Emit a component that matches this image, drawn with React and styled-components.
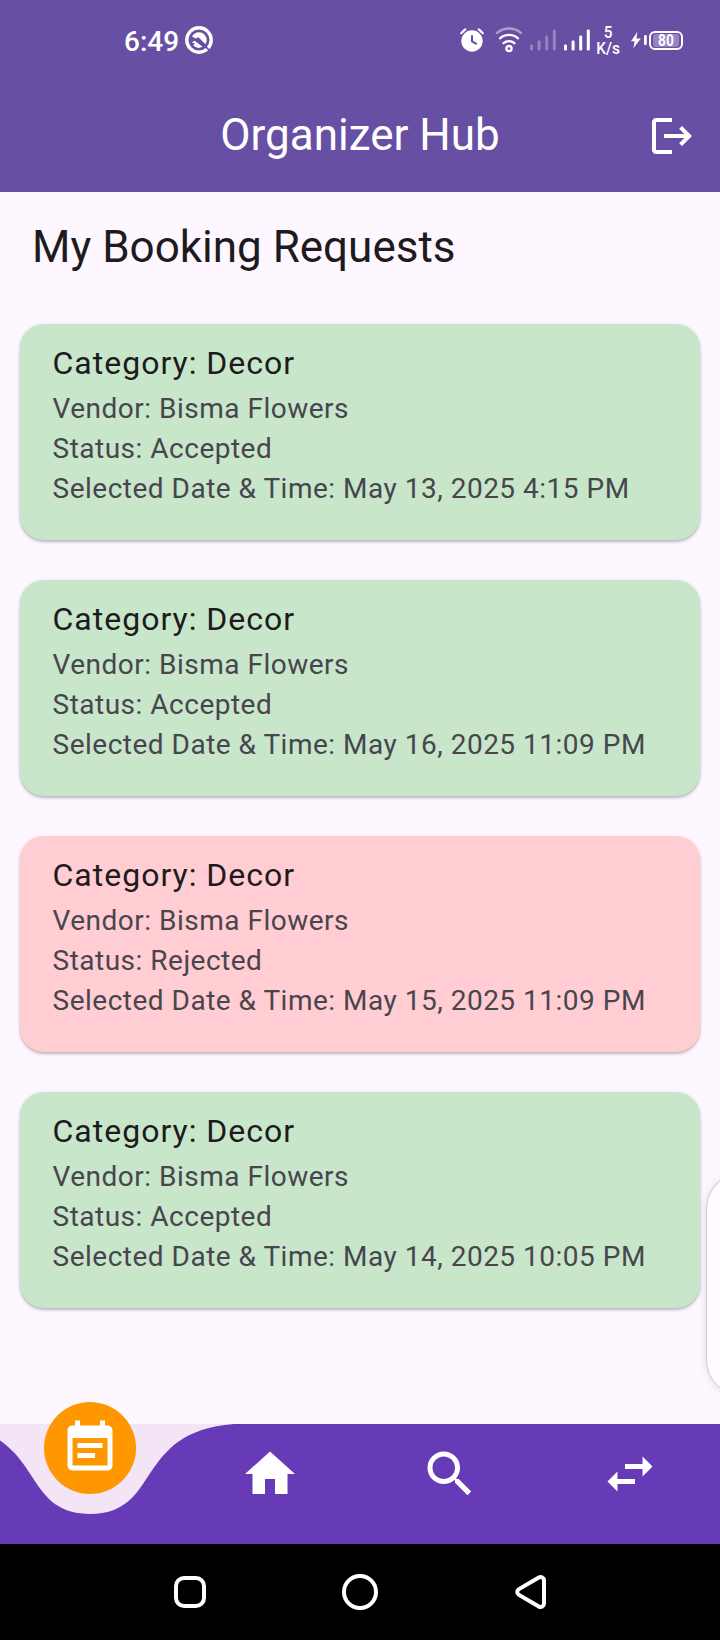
import React from 'react';
import styled, { createGlobalStyle } from 'styled-components';
import { MdEventNote, MdHome, MdLogout, MdSearch, MdSwapHoriz } from 'react-icons/md';

const GlobalStyle = createGlobalStyle`
  * { box-sizing: border-box; }
  body {
    margin: 0;
    background: #fef7ff;
    font-family: Roboto, sans-serif;
  }
`;

const Screen = styled.div`
  position: relative;
  display: flex;
  flex-direction: column;
  width: 720px;
  height: 1640px;
  overflow: hidden;
  background: #fef7ff;
  color: #1d1b20;
`;

const Header = styled.header`
  background: #6750a4;
  color: #fff;
`;

const StatusBar = styled.div`
  display: flex;
  align-items: center;
  justify-content: space-between;
  height: 80px;
  padding: 0 37px 0 124px;
`;

const StatusGroup = styled.div`
  display: flex;
  align-items: center;
`;

const Clock = styled.span`
  margin-right: 5.5px;
  padding-top: 3px;
  font-size: 28px;
  font-weight: 500;
  line-height: 32px;
`;

const Glyph = styled.svg`
  display: block;
  flex: none;
  margin-left: ${(p) => p.$gap || 0}px;
  opacity: ${(p) => p.$opacity || 1};
`;

const Speed = styled.div`
  display: flex;
  flex-direction: column;
  align-items: center;
  width: 26px;
  margin: 1px 0 0 5px;
  font-size: 16.5px;
  font-weight: 500;
  line-height: 16px;
  transform: scaleX(0.93);
`;

const Battery = styled.div`
  display: flex;
  align-items: center;
  justify-content: center;
  width: 34px;
  height: 19px;
  margin-left: 2px;
  padding: 2px;
  border: 2px solid #fff;
  border-radius: 6px;
`;

const BatteryLevel = styled.div`
  flex: 1;
  height: 13px;
  border-radius: 3px;
  background: rgba(255, 255, 255, 0.3);
  text-align: center;
`;

const BatteryValue = styled.span`
  display: block;
  font-size: 16px;
  font-weight: 700;
  line-height: 13px;
  transform: scaleX(0.86);
`;

const AppBar = styled.div`
  display: grid;
  grid-template-columns: 1fr auto 1fr;
  align-items: center;
  height: 112px;
  padding: 0 24px;
`;

const AppTitle = styled.h1`
  grid-column: 2;
  margin: 0 0 2px;
  font-size: 44px;
  font-weight: 400;
  line-height: 56px;
`;

const IconButton = styled.button`
  display: flex;
  justify-self: end;
  padding: 0;
  border: 0;
  background: none;
  color: inherit;
  font-size: 48px;
`;

const Content = styled.main`
  flex: 1;
  padding: 0 20px;
`;

const Heading = styled.h2`
  height: 132px;
  margin: 0;
  padding: 27px 12px 0;
  font-size: 44px;
  font-weight: 400;
  line-height: 56px;
`;

const CardList = styled.div`
  display: flex;
  flex-direction: column;
  gap: 40px;
`;

const Card = styled.article`
  height: 216px;
  padding: 15px 32px 15px 32.5px;
  border-radius: 24px;
  background: ${(p) => (p.$status === 'Rejected' ? '#ffcdd2' : '#c8e6c9')};
  box-shadow: 0 2px 3px rgba(0, 0, 0, 0.21), 0 1px 4px rgba(0, 0, 0, 0.09);
`;

const CardTitle = styled.h3`
  margin: 0 0 2px;
  font-size: 32px;
  font-weight: 400;
  line-height: 48px;
  letter-spacing: 1px;
`;

const CardLine = styled.p`
  margin: 0;
  color: #49454f;
  font-size: 28px;
  line-height: 40px;
  letter-spacing: 0.5px;
  white-space: nowrap;
`;

const EdgeHandle = styled.div`
  position: absolute;
  top: 1173px;
  right: -60px;
  width: 74px;
  height: 223px;
  border: 1px solid #cfcad1;
  border-radius: 36px;
  background: #fffbff;
  box-shadow: 0 0 8px rgba(0, 0, 0, 0.12);
`;

const TabBar = styled.nav`
  position: relative;
  display: grid;
  grid-template-columns: repeat(4, 1fr);
  height: 120px;
  background: #f3e5f5;
  color: #fff;
`;

const Wave = styled.svg`
  position: absolute;
  inset: 0;
`;

const Tab = styled.button`
  position: relative;
  display: flex;
  align-items: flex-start;
  justify-content: center;
  padding: ${(p) => (p.$active ? 0 : '20px 0 0')};
  border: 0;
  background: none;
  color: inherit;
  font-size: 60px;
`;

const ActiveDisc = styled.span`
  display: flex;
  align-items: center;
  justify-content: center;
  width: 92px;
  height: 92px;
  margin-top: -22px;
  border-radius: 50%;
  background: #ff9800;
`;

const SystemBar = styled.footer`
  display: flex;
  align-items: center;
  justify-content: center;
  gap: 130px;
  height: 96px;
  background: #000;
`;

const BOOKINGS = [
  { status: 'Accepted', when: 'May 13, 2025 4:15 PM' },
  { status: 'Accepted', when: 'May 16, 2025 11:09 PM' },
  { status: 'Rejected', when: 'May 15, 2025 11:09 PM' },
  { status: 'Accepted', when: 'May 14, 2025 10:05 PM' },
];

function Signal({ gap, opacity }) {
  return (
    <Glyph width="26" height="22" viewBox="0 0 26 22" fill="#fff" $gap={gap} $opacity={opacity}>
      <rect x="0" y="15.5" width="3" height="6" rx="1.2" />
      <rect x="7.6" y="11.5" width="3" height="10" rx="1.2" />
      <rect x="15.2" y="6.5" width="3" height="15" rx="1.2" />
      <rect x="22.8" y="0.5" width="3" height="21" rx="1.2" />
    </Glyph>
  );
}

function BookingCard({ status, when }) {
  return (
    <Card $status={status}>
      <CardTitle>Category: Decor</CardTitle>
      <CardLine>Vendor: Bisma Flowers</CardLine>
      <CardLine>Status: {status}</CardLine>
      <CardLine>Selected Date &amp; Time: {when}</CardLine>
    </Card>
  );
}

export default function App() {
  return (
    <Screen>
      <GlobalStyle />
      <Header>
        <StatusBar>
          <StatusGroup>
            <Clock>6:49</Clock>
            <Glyph width="28" height="28" viewBox="0 0 28 28">
              <circle cx="14" cy="14" r="12.2" fill="none" stroke="#fff" strokeWidth="3.4" />
              <path d="M7 10.6A7.8 7.8 0 1 1 20.6 18.2L13.4 11.2L10.6 12.6z" fill="#fff" />
              <path d="M6.8 16.4L9.6 14.8L12 16.6L17.6 20.8A7.8 7.8 0 0 1 8.2 19.2L10 17.6z" fill="#fff" />
              <path d="M13 13.4L26 25.8" stroke="#6750a4" strokeWidth="1.8" />
            </Glyph>
          </StatusGroup>
          <StatusGroup>
            <Glyph width="24" height="24" viewBox="0 0 24 24">
              <circle cx="12" cy="13" r="10.7" fill="#fff" />
              <path d="M12 7.3v6.2l4.8 2.6" fill="none" stroke="#6750a4" strokeWidth="2" />
              <path d="M1.2 5.2l4-3.8M22.8 5.2l-4-3.8" stroke="#fff" strokeWidth="2.2" strokeLinecap="round" />
            </Glyph>
            <Glyph width="28" height="26" viewBox="0 0 28 26" fill="none" stroke="#fff" strokeWidth="2.3" strokeLinecap="round" $gap={11}>
              <path d="M1.8 6.1a18.5 18.5 0 0 1 24.4 0" opacity="0.45" />
              <path d="M5 11.3a13.5 13.5 0 0 1 18 0" />
              <path d="M8.6 16.2a8.3 8.3 0 0 1 10.8 0" />
              <circle cx="14" cy="21.6" r="2.6" />
            </Glyph>
            <Signal gap={7} opacity={0.3} />
            <Signal gap={8} />
            <Speed>
              <span>5</span>
              <span>K/s</span>
            </Speed>
            <Glyph width="16" height="18" viewBox="0 0 16 18" fill="#fff" $gap={10}>
              <path d="M6.4 0.8L0 10.2H3.6L2.4 17.2L9.8 7.6H5.4z" />
              <rect x="13" y="4" width="2.8" height="10" rx="1.2" />
            </Glyph>
            <Battery>
              <BatteryLevel>
                <BatteryValue>80</BatteryValue>
              </BatteryLevel>
            </Battery>
          </StatusGroup>
        </StatusBar>
        <AppBar>
          <AppTitle>Organizer Hub</AppTitle>
          <IconButton aria-label="Log out">
            <MdLogout />
          </IconButton>
        </AppBar>
      </Header>

      <Content>
        <Heading>My Booking Requests</Heading>
        <CardList>
          {BOOKINGS.map((b) => (
            <BookingCard key={b.when} {...b} />
          ))}
        </CardList>
      </Content>
      <EdgeHandle />

      <TabBar>
        <Wave width="720" height="120" viewBox="0 0 720 120" fill="#673ab7">
          <path d="M-54 0C46.8 7.5 18 90 90 90C162 90 133.2 7.5 234 0H720V120H-54z" />
        </Wave>
        <Tab $active aria-label="Bookings">
          <ActiveDisc>
            <MdEventNote />
          </ActiveDisc>
        </Tab>
        <Tab aria-label="Home">
          <MdHome />
        </Tab>
        <Tab aria-label="Search">
          <MdSearch />
        </Tab>
        <Tab aria-label="Swap">
          <MdSwapHoriz />
        </Tab>
      </TabBar>

      <SystemBar>
        <Glyph width="40" height="40" viewBox="0 0 40 40" fill="none" stroke="#fff" strokeWidth="4">
          <rect x="6" y="6" width="28" height="28" rx="8" />
        </Glyph>
        <Glyph width="40" height="40" viewBox="0 0 40 40" fill="none" stroke="#fff" strokeWidth="4">
          <circle cx="20" cy="20" r="16" />
        </Glyph>
        <Glyph width="40" height="40" viewBox="0 0 40 40" fill="none" stroke="#fff" strokeWidth="4">
          <path d="M34 8.5v23a3.4 3.4 0 0 1-5.2 3L8.6 22.6a3.2 3.2 0 0 1 0-5.2L28.8 5.5a3.4 3.4 0 0 1 5.2 3z" />
        </Glyph>
      </SystemBar>
    </Screen>
  );
}
